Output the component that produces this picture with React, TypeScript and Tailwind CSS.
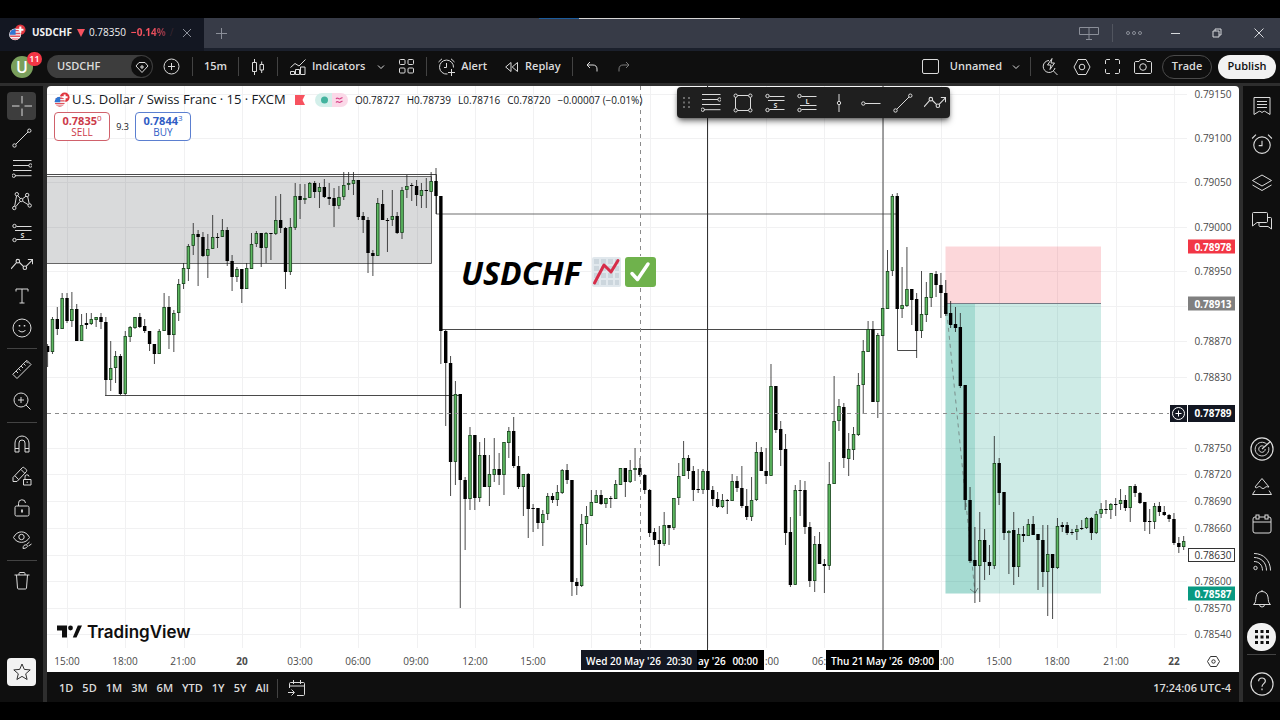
import React from 'react';

type Candle = [high: number, top: number, bottom: number, low: number, up: 0 | 1];

// One entry per 15 minute bar, values are chart y positions
const candles: Candle[] = [
  [344, 346, 352, 367, 0], [317, 319, 352, 354, 1], [307, 319, 329, 335, 0], [293, 298, 329, 329, 1],
  [293, 298, 321, 323, 0], [292, 309, 321, 327, 1], [304, 309, 341, 341, 0], [314, 325, 341, 341, 1],
  [313, 323, 325, 329, 0], [313, 319, 324, 325, 1], [317, 317, 320, 327, 1], [313, 317, 322, 329, 0],
  [317, 322, 380, 395, 0], [341, 368, 380, 391, 1], [351, 356, 368, 383, 1], [354, 356, 394, 395, 0],
  [331, 336, 394, 395, 1], [326, 327, 337, 342, 1], [317, 317, 328, 329, 1], [313, 317, 327, 328, 0],
  [319, 326, 331, 333, 0], [331, 331, 344, 351, 0], [344, 344, 354, 364, 0], [329, 331, 354, 354, 1],
  [293, 307, 331, 331, 1], [296, 307, 335, 349, 0], [310, 313, 335, 352, 1], [279, 284, 313, 321, 1],
  [263, 268, 284, 289, 1], [244, 246, 269, 281, 1], [223, 234, 246, 255, 1], [230, 234, 237, 286, 0],
  [232, 237, 256, 257, 0], [234, 249, 256, 278, 1], [215, 237, 249, 249, 1], [233, 237, 238, 248, 0],
  [219, 230, 237, 237, 1], [227, 230, 261, 266, 0], [255, 261, 277, 291, 0], [267, 269, 277, 282, 1],
  [269, 269, 289, 303, 0], [263, 268, 289, 289, 1], [233, 244, 269, 269, 1], [231, 233, 244, 247, 1],
  [233, 233, 248, 267, 0], [232, 233, 248, 263, 1], [233, 233, 234, 260, 1], [196, 220, 234, 235, 1],
  [194, 220, 228, 233, 0], [227, 228, 272, 289, 0], [218, 227, 272, 275, 1], [183, 196, 228, 230, 1],
  [184, 196, 200, 219, 0], [184, 198, 200, 204, 1], [182, 183, 198, 198, 1], [181, 183, 192, 198, 0],
  [183, 187, 192, 208, 1], [179, 187, 197, 198, 0], [183, 197, 199, 205, 0], [188, 198, 206, 227, 0],
  [186, 197, 206, 209, 1], [172, 185, 197, 200, 1], [172, 183, 185, 190, 1], [172, 180, 184, 195, 1],
  [180, 180, 217, 220, 0], [212, 216, 220, 233, 0], [217, 220, 253, 273, 0], [250, 253, 256, 276, 0],
  [198, 203, 256, 256, 1], [190, 204, 220, 220, 0], [218, 220, 221, 252, 0], [190, 216, 220, 226, 1],
  [212, 216, 233, 234, 0], [187, 190, 233, 239, 1], [175, 186, 190, 198, 1], [183, 185, 186, 201, 0],
  [180, 186, 195, 206, 0], [183, 190, 196, 208, 1], [178, 190, 191, 208, 0], [172, 181, 192, 192, 1],
  [168, 181, 196, 214, 0], [196, 196, 331, 364, 0], [330, 331, 363, 426, 0], [356, 363, 462, 496, 0],
  [381, 394, 462, 485, 1], [394, 394, 480, 608, 0], [477, 480, 499, 550, 0], [427, 435, 499, 510, 1],
  [435, 435, 498, 510, 0], [442, 455, 498, 502, 1], [438, 455, 487, 487, 0], [455, 474, 487, 506, 1],
  [438, 469, 475, 482, 1], [453, 469, 475, 485, 0], [442, 442, 475, 495, 1], [427, 431, 443, 458, 1],
  [417, 431, 466, 468, 0], [456, 466, 487, 489, 0], [474, 474, 487, 516, 1], [473, 474, 509, 538, 0],
  [504, 508, 509, 532, 1], [508, 508, 523, 529, 0], [510, 514, 523, 546, 1], [493, 496, 514, 520, 1],
  [493, 496, 500, 503, 0], [485, 492, 500, 506, 1], [469, 470, 493, 494, 1], [464, 470, 480, 484, 0],
  [480, 480, 582, 596, 0], [578, 582, 586, 595, 0], [514, 524, 586, 587, 1], [506, 516, 524, 545, 1],
  [490, 502, 516, 516, 1], [490, 495, 503, 503, 1], [490, 495, 504, 505, 0], [498, 498, 504, 508, 1],
  [496, 498, 499, 508, 1], [480, 484, 499, 499, 1], [468, 468, 485, 485, 1], [468, 468, 482, 497, 0],
  [460, 470, 482, 483, 1], [448, 468, 470, 481, 1], [458, 468, 475, 477, 0], [474, 475, 490, 494, 0],
  [489, 490, 533, 537, 0], [528, 532, 540, 545, 0], [526, 540, 544, 566, 0], [512, 525, 544, 546, 1],
  [525, 525, 528, 545, 0], [498, 498, 528, 530, 1], [463, 476, 498, 505, 1], [441, 458, 476, 476, 1],
  [455, 458, 471, 479, 0], [466, 471, 490, 501, 0], [469, 489, 490, 493, 0], [469, 471, 490, 494, 1],
  [471, 471, 490, 490, 0], [486, 490, 499, 506, 0], [492, 499, 507, 508, 0], [494, 500, 507, 508, 1],
  [499, 500, 501, 514, 0], [474, 481, 501, 501, 1], [476, 481, 488, 492, 0], [466, 488, 506, 508, 0],
  [489, 506, 517, 520, 0], [477, 500, 517, 521, 1], [442, 452, 500, 501, 1], [447, 452, 471, 471, 0],
  [448, 471, 476, 484, 0], [364, 386, 476, 476, 1], [386, 386, 430, 433, 0], [421, 429, 450, 466, 0],
  [434, 449, 533, 545, 0], [517, 532, 585, 587, 0], [485, 490, 585, 585, 1], [480, 490, 491, 516, 0],
  [481, 490, 527, 534, 0], [522, 527, 581, 587, 0], [536, 544, 581, 592, 1], [532, 544, 564, 564, 0],
  [559, 564, 566, 593, 0], [462, 484, 566, 570, 1], [376, 421, 484, 484, 1], [399, 406, 421, 431, 1],
  [403, 407, 458, 468, 0], [433, 449, 459, 476, 1], [427, 434, 450, 460, 1], [373, 385, 435, 436, 1],
  [340, 351, 385, 414, 1], [321, 329, 352, 352, 1], [321, 329, 402, 402, 0], [333, 335, 402, 418, 1],
  [308, 308, 336, 336, 1], [250, 271, 309, 309, 1], [194, 196, 271, 276, 1], [193, 196, 309, 309, 0],
  [267, 305, 309, 318, 1], [247, 289, 306, 307, 1], [289, 289, 300, 325, 0], [293, 299, 331, 358, 0],
  [271, 314, 331, 338, 1], [282, 297, 315, 322, 1], [273, 273, 298, 307, 1], [271, 274, 285, 297, 0],
  [273, 285, 293, 318, 0], [280, 293, 314, 316, 0], [301, 313, 325, 328, 0], [307, 324, 328, 332, 0],
  [313, 327, 386, 388, 0], [385, 385, 500, 510, 0], [487, 500, 561, 563, 0], [527, 560, 566, 603, 0],
  [512, 540, 566, 602, 1], [529, 540, 562, 580, 0], [545, 562, 566, 575, 0], [436, 463, 566, 569, 1],
  [458, 463, 493, 505, 0], [492, 492, 533, 540, 0], [530, 531, 533, 574, 1], [512, 530, 567, 585, 0],
  [528, 534, 567, 577, 1], [526, 534, 536, 542, 0], [519, 524, 536, 536, 1], [516, 524, 535, 535, 0],
  [534, 534, 540, 590, 0], [525, 540, 572, 587, 0], [525, 554, 572, 616, 1], [554, 554, 568, 619, 0],
  [518, 526, 568, 569, 1], [522, 525, 527, 532, 0], [522, 525, 533, 535, 0], [529, 532, 533, 535, 0],
  [525, 529, 532, 540, 1], [520, 528, 529, 530, 1], [517, 518, 528, 529, 1], [517, 518, 533, 540, 0],
  [511, 514, 533, 534, 1], [503, 509, 514, 518, 1], [500, 509, 510, 514, 0], [503, 504, 510, 519, 1],
  [498, 504, 505, 516, 0], [489, 500, 504, 510, 1], [495, 500, 508, 511, 0], [486, 486, 508, 522, 1],
  [484, 486, 493, 497, 0], [492, 493, 503, 504, 0], [502, 502, 522, 531, 0], [509, 521, 522, 534, 0],
  [503, 506, 522, 529, 1], [502, 506, 512, 516, 0], [506, 512, 515, 516, 0], [514, 515, 519, 522, 0],
  [513, 519, 543, 545, 0], [537, 543, 547, 553, 0], [536, 541, 547, 550, 1],
];

const prices: Array<[string, number]> = [
  ['0.79150', 94], ['0.79100', 138], ['0.79050', 182], ['0.79000', 227], ['0.78950', 271],
  ['', 306], ['0.78870', 341], ['0.78830', 377], ['0.78750', 448], ['0.78720', 474],
  ['0.78690', 501], ['0.78660', 528], ['', 555], ['0.78600', 581], ['0.78570', 608], ['0.78540', 634],
];

const hours = Array.from({ length: 20 }, (_, i) => Math.round(67 + i * 58.26));

// Labels next to a cursor tag only show the part that sticks out
const times: Array<[string, number]> = [
  ['15:00', 67], ['18:00', 125], ['21:00', 183], ['20', 242], ['03:00', 300], ['06:00', 358],
  ['09:00', 416], ['12:00', 475], ['15:00', 533], [':00', 772], ['06:', 819], [':00', 947],
  ['15:00', 999], ['18:00', 1057], ['21:00', 1116], ['22', 1174],
];

const barX = (i: number) => 47.6 + i * 4.855;

/* ---------- icons ---------- */

const Icon = ({ children, className = 'h-5 w-5' }: { children: React.ReactNode; className?: string }) => (
  <svg className={`${className} shrink-0`} viewBox="0 0 20 20" fill="none" stroke="currentColor" strokeWidth="1" aria-hidden="true">
    {children}
  </svg>
);

const CrossIcon = () => <Icon><path d="M10 0v7.500M10 12.500V20M0 10h7.500M12.500 10H20" /></Icon>;
const TrendIcon = () => (
  <Icon><circle cx="2.500" cy="17.500" r="1.700" /><circle cx="17.300" cy="2.700" r="1.700" /><path d="M3.800 16.200 16 4" /></Icon>
);
const FibIcon = () => (
  <Icon><path d="M1 1.500h18.500M1 6.500h16M1 11.500h18.500M3 16.700h16.500" /><circle cx="18.500" cy="6.500" r="1.700" /><circle cx="1.700" cy="16.700" r="1.700" /></Icon>
);
const PatternIcon = () => (
  <Icon>
    <circle cx="4.800" cy="3.200" r="1.700" /><circle cx="15.200" cy="4" r="1.700" /><circle cx="2.300" cy="17" r="1.700" />
    <circle cx="17.700" cy="14.500" r="1.700" /><circle cx="9.200" cy="9" r="1.700" />
    <path d="M4.500 5 2.700 15.200M5.800 4.600l2.500 3M10.500 7.800l3.500-2.600M15.700 5.700l1.500 7.200M10.600 10.200l5.600 3.500M3.700 15.800l4.300-5.300" />
  </Icon>
);
const LevelIcon = ({ letter }: { letter: 'S' | 'L' }) => (
  <Icon>
    <circle cx="2.500" cy="3" r="1.700" /><circle cx="2.500" cy="17" r="1.700" />
    <path d={letter === 'S' ? 'M4.500 3.500H19.500M3 7.500h16.500M4.500 16.500H19.500' : 'M4.500 3.500H19.500M3 12.500h16.500M4.500 16.500H19.500'} />
    <text x="10.500" y={letter === 'S' ? 15 : 10.500} fontSize="7" fontWeight="700" textAnchor="middle" fill="currentColor" stroke="none">{letter}</text>
  </Icon>
);
const PathIcon = () => (
  <Icon className="h-[22px] w-[22px]">
    <path d="M0 13.500 4.800 8M7.500 7.500l4 4M13.700 11.300l5.800-6M15.300 5h4.300v4.300" /><circle cx="6.200" cy="6.500" r="1.600" /><circle cx="12.600" cy="12.500" r="1.600" />
  </Icon>
);
const TextIcon = () => <Icon><path d="M4 5.500V3h12v2.500M10 3v14M7.500 17h5" /></Icon>;
const SmileIcon = () => (
  <Icon><circle cx="10" cy="10" r="9" /><path d="M7.500 7v1.500M12.500 7v1.500" strokeWidth="1.500" /><path d="M6.500 12c1.500 2.500 5.500 2.500 7 0" /></Icon>
);
const RulerIcon = () => (
  <Icon><path d="m.8 15.300 14-14 4.200 4.200-14 14zM4 12l2 2M6.500 9.500l2 2M9 7l2 2M11.500 4.500l2 2M13.800 2.200l2 2" /></Icon>
);
const ZoomIcon = () => <Icon><circle cx="9" cy="9" r="7" /><path d="M14 14l4.500 4.500M9 6v6M6 9h6" /></Icon>;
const MagnetIcon = () => (
  <Icon><path d="M3 18V9a7 7 0 0 1 14 0v9h-4V9a3 3 0 0 0-6 0v9zM3 14.500h4M13 14.500h4" /></Icon>
);
const PencilLockIcon = () => (
  <Icon>
    <path d="m1 11.500 9.300-9.800a1.500 1.500 0 0 1 2 0l2 2a1.500 1.500 0 0 1 0 2L5 15.500H1zM9 3.500l3.800 3.800M3 9.800l3.500 3.700" />
    <path d="M11.500 13.500h7.500v5.500h-7.500zM13 13.500v-2.300a2 2 0 0 1 4-.7M15.200 15.500v1.500" />
  </Icon>
);
const LockIcon = () => (
  <Icon><rect x="3" y="8" width="14" height="10" rx="1.500" /><path d="M6.500 8V5.500a3.500 3.500 0 0 1 7-.5" /><path d="M10 11.500v3" strokeWidth="1.800" /></Icon>
);
const EyeIcon = () => (
  <Icon>
    <path d="M1.500 7.500C5 0 14 0 17.500 7.500 14 14 5 14 1.500 7.500z" /><circle cx="9.500" cy="7" r="2.700" />
    <path d="M11 18.500c0-3 1.500-4 3.500-3.500s1 3.500-3.500 3.500zM14.500 14.500l3-2.500M16.500 16l3-2" />
  </Icon>
);
const TrashIcon = () => (
  <Icon><path d="M2.500 4h15M7 4V2.500c0-.6.400-1 1-1h4c.6 0 1 .4 1 1V4M4.500 4l1 13c0 .6.500 1 1 1h7c.5 0 1-.4 1-1l1-13" /></Icon>
);
const StarIcon = () => (
  <Icon><path d="m10 2 2.300 5.400 5.900.5-4.500 3.900 1.400 5.700L10 14.400l-5.100 3.100 1.400-5.700L1.800 7.900l5.900-.5z" /></Icon>
);
const RectIcon = () => (
  <Icon>
    <path d="M4.500 2.500h11M4.500 17.500h11M2.500 4.500v11M17.500 4.500v11" />
    <circle cx="2.700" cy="2.700" r="1.700" /><circle cx="17.300" cy="2.700" r="1.700" /><circle cx="2.700" cy="17.300" r="1.700" /><circle cx="17.300" cy="17.300" r="1.700" />
  </Icon>
);
const VLineIcon = () => <Icon><path d="M10 1v7.300M10 11.700V19" /><circle cx="10" cy="10" r="1.700" /></Icon>;
const RayIcon = () => <Icon><path d="M4 10.500h15.500" /><circle cx="2.300" cy="10.500" r="1.700" /></Icon>;

const AlarmIcon = () => (
  <Icon className="h-[22px] w-[22px]"><circle cx="10" cy="11" r="7.500" /><path d="M10 7v4.500H7M1 5l3.500-3.500M19 5l-3.500-3.500" /></Icon>
);
const ListIcon = () => (
  <Icon><path d="M2 1.500h16v17l-4-2.500c-1.500-1-1.500-1-3-.2L10 16.500l-1-.7c-1.500-.8-1.500-.8-3 .2l-4 2.500zM5 5.500h10M5 8.500h10M5 11.500h10" /></Icon>
);
const LayersIcon = () => <Icon><path d="M10 2 19.500 7.500 10 13 .5 7.500zM.5 12l9.500 5.500 9.500-5.500" /></Icon>;
const ChatIcon = () => (
  <Icon><path d="M.5 2.500c0-.6.400-1 1-1h13c.6 0 1 .4 1 1v8c0 .6-.4 1-1 1H5L.5 15zM15.500 6.500h3c.6 0 1 .4 1 1V18l-3.500-2.500H8c-.6 0-1-.4-1-1v-3" /></Icon>
);
const TargetIcon = () => (
  <Icon className="h-6 w-6"><circle cx="10" cy="10" r="9.200" /><path d="M14 6A5.700 5.700 0 1 0 15.500 8.500M11.500 7.800a2.700 2.700 0 1 0 1.200 2.200" strokeWidth=".8" /><path d="m10 10 7-6.200" /></Icon>
);
const PyramidIcon = () => (
  <Icon><path d="M10 1.500 17 10M10 1.500 3 10c2 2.500 3.500-2 5.500 0s3 2 4.500.5 2-.5 4-.5M3 13.500.5 17.500h19L17 13.500" /></Icon>
);
const CalendarIcon = () => (
  <Icon><rect x="1" y="3" width="18" height="16" rx="2" /><path d="M1 8h18" /><rect x="4" y="1" width="3" height="4" fill="#0f0f0f" /><rect x="13" y="1" width="3" height="4" fill="#0f0f0f" /></Icon>
);
const FeedIcon = () => (
  <Icon><circle cx="3.500" cy="16" r="1.700" /><path d="M2 9.500c5 0 8.500 3.500 8.500 9M2 5.500c7 0 12.500 5 12.500 13M2 1.500c9.500 0 16.500 7 16.500 17" /></Icon>
);
const BellIcon = () => (
  <Icon><path d="M1.500 15.500c2.500-2 2-4 2.500-7.500.5-3.500 3-5.500 6-5.500s5.500 2 6 5.500c.5 3.500 0 5.500 2.500 7.500zM7.500 15.500a2.500 2.500 0 0 0 5 0M10 2.500V1" /></Icon>
);
const HelpIcon = () => (
  <Icon className="h-6 w-6"><circle cx="10" cy="10" r="9.200" /><path d="M7.200 7.800c0-3.700 5.600-3.700 5.600-.3 0 2.200-2.800 2.200-2.800 4.700M10 13.700v1.600" /></Icon>
);

const PairFlags = ({ className }: { className: string }) => (
  <svg className={`${className} shrink-0`} viewBox="0 0 18 18" aria-hidden="true">
    <circle cx="12" cy="6" r="5.500" fill="#e0363f" />
    <path d="M12 2.700v6.600M8.700 6h6.600" stroke="#fff" strokeWidth="2.200" />
    <circle cx="6.500" cy="11" r="6.300" fill="#fff" />
    <clipPath id="usd"><circle cx="6.500" cy="11" r="5.700" /></clipPath>
    <g clipPath="url(#usd)">
      <path d="M0 5h13v12H0z" fill="#f3f3f5" />
      <path d="M0 7h13M0 10h13M0 13h13M0 16h13" stroke="#e2515b" strokeWidth="1.500" />
      <path d="M0 5h7v6.500H0z" fill="#2f76d2" />
    </g>
  </svg>
);

const Divider = () => <span className="h-[19px] w-px bg-[#434343]" />;
const Chevron = () => (
  <svg className="h-2 w-2" viewBox="0 0 8 8" fill="none" stroke="currentColor" aria-hidden="true"><path d="m1 2.500 3 3 3-3" /></svg>
);

/* ---------- window frame ---------- */

const TabBar = () => (
  <header className="relative flex h-[33px] items-start border-b-[3px] border-[#1b202c] bg-[#373b47] text-[#8b8f99]">
    <div className="absolute left-[539px] top-0 flex h-px w-[201px]">
      <span className="w-10 bg-[#1d5c9c]" />
      <span className="flex-1 bg-[#d5d5d5]" />
    </div>
    <div className="flex h-[33px] w-[204px] shrink-0 items-center bg-[#131722] pb-1 pl-[9px] text-[10px] text-[#f2f2f2]">
      <PairFlags className="mr-1.5 h-[17px] w-[17px]" />
      <span className="w-[45px] font-bold">USDCHF</span>
      <svg className="mr-1 h-2 w-2" viewBox="0 0 8 8" aria-hidden="true"><path d="M0 0h8L4 8z" fill="#f7525f" /></svg>
      <span className="w-[42px] font-medium">0.78350</span>
      <span className="bg-gradient-to-r from-[#f7525f] from-60% to-[#7c3040] bg-clip-text font-bold text-transparent">−0.14%</span>
      <span className="ml-1 text-[#3a2630]">/</span>
      <button aria-label="Close tab" className="ml-auto mr-3 text-[#8b8f99]">
        <svg className="h-2.5 w-2.5" viewBox="0 0 10 10" stroke="currentColor"><path d="m1 1 8 8M9 1 1 9" /></svg>
      </button>
    </div>
    <div className="flex h-[30px] flex-1 items-center">
      <button aria-label="New tab" className="ml-3">
        <svg className="h-[11px] w-[11px]" viewBox="0 0 11 11" stroke="currentColor"><path d="M0 5.500h11M5.500 0v11" /></svg>
      </button>
      <button aria-label="Link windows" className="ml-auto">
        <svg className="h-[13px] w-5" viewBox="0 0 20 13" fill="none" stroke="currentColor"><path d="M.5.500h19v7H.5zM10 .5v11.500M7 12.500h6" /></svg>
      </button>
      <span className="mx-[13px] h-[18px] w-px bg-[#51555f]" />
      <button aria-label="More" className="mr-7">
        <svg className="h-1.5 w-4" viewBox="0 0 16 6" fill="none" stroke="currentColor"><circle cx="2" cy="3" r="1.500" /><circle cx="8" cy="3" r="1.500" /><circle cx="14" cy="3" r="1.500" /></svg>
      </button>
      <div className="mr-4 flex items-center gap-8 text-[#d6d8dc]">
        <button aria-label="Minimize">
          <svg className="h-2.5 w-2.5" viewBox="0 0 10 10" stroke="currentColor"><path d="M1 5.500h9" /></svg>
        </button>
        <button aria-label="Restore">
          <svg className="h-2.5 w-2.5" viewBox="0 0 10 10" fill="none" stroke="currentColor"><path d="M1 3h6v6H1zM3 3V1h6v6H7" /></svg>
        </button>
        <button aria-label="Close">
          <svg className="h-2.5 w-2.5" viewBox="0 0 10 10" stroke="currentColor"><path d="m.5.500 9 9M9.500.500l-9 9" /></svg>
        </button>
      </div>
    </div>
  </header>
);

const Toolbar = () => (
  <nav className="flex h-[35px] items-start border-b-[3px] border-[#2e2e2e] bg-[#0f0f0f] text-[11px] font-semibold text-[#dbdbdb]">
    <div className="flex h-[31px] w-full items-center">
      <button aria-label="Account" className="relative ml-[11px] h-[22px] w-[22px] rounded-full bg-[#7a9f5c] text-[16px] leading-[22px] text-white">
        U
        <span className="absolute -top-1 left-4 h-[14px] w-[15px] rounded-full bg-[#f23645] text-[9px] leading-[14px]">11</span>
      </button>
      <button className="ml-[14px] flex h-[23px] w-[106px] items-center justify-between rounded-full bg-[#3d3d3d] pl-[10px] pr-px">
        USDCHF
        <span className="flex h-[21px] w-[21px] items-center justify-center rounded-full bg-[#0f0f0f]">
          <svg className="h-3.5 w-3.5" viewBox="0 0 14 14" fill="none" stroke="currentColor"><path d="M4 2.500h6L13 6l-6 6.500L1 6zM7 5v4M5 7h4" /></svg>
        </span>
      </button>
      <button aria-label="Compare symbols" className="ml-2.5 mr-3">
        <svg className="h-[17px] w-[17px]" viewBox="0 0 17 17" fill="none" stroke="currentColor"><circle cx="8.500" cy="8.500" r="7.500" /><path d="M8.500 5v7M5 8.500h7" /></svg>
      </button>
      <Divider />
      <button className="w-[45px]">15m</button>
      <Divider />
      <button aria-label="Candles" className="mx-3">
        <svg className="h-4 w-[14px]" viewBox="0 0 14 16" fill="none" stroke="currentColor"><path d="M1.500 3.500h4v9h-4zM3.500 0v3.500M3.500 12.500V16M9 5.500h3.500V11H9zM10.700 2.500v3M10.700 11v3" /></svg>
      </button>
      <Divider />
      <button className="ml-3 flex items-center gap-1.5">
        <svg className="h-4 w-4" viewBox="0 0 16 16" fill="none" stroke="currentColor"><path d="M.5 15.500v-3h4v3zM5.500 15.500v-5h4v5zM10.500 15.500V8h4.500v7.500zM.5 8.500 5 4.500l4 2.500L15.500.500" /></svg>
        Indicators
      </button>
      <button aria-label="Indicator templates" className="ml-3 mr-[14px]"><Chevron /></button>
      <button aria-label="Layouts" className="mr-3">
        <svg className="h-[15px] w-[15px]" viewBox="0 0 15 15" fill="none" stroke="currentColor"><rect x=".5" y=".5" width="5.500" height="5" rx="1" /><rect x="9" y=".5" width="5.500" height="5" rx="1" /><rect x=".5" y="9" width="5.500" height="5" rx="1" /><rect x="9" y="9" width="5.500" height="5" rx="1" /></svg>
      </button>
      <Divider />
      <button className="ml-[11px] flex items-center gap-[5px]">
        <svg className="h-[18px] w-[18px]" viewBox="0 0 18 18" fill="none" stroke="currentColor"><path d="M15.500 9.500a7 7 0 1 0-6 6.500M8.500 5v4.500H6M.5 4 4 .800M16.500 4 13 .800M13.500 11v7M10 14.500h7" /></svg>
        Alert
      </button>
      <button className="ml-[18px] mr-[11px] flex items-center gap-[7px]">
        <svg className="h-3 w-[13px]" viewBox="0 0 13 12" fill="none" stroke="currentColor"><path d="M6 1.500v9L.7 6zM12.500 1.500v9L7.200 6z" strokeLinejoin="round" /></svg>
        Replay
      </button>
      <Divider />
      <button aria-label="Undo" className="ml-[13px] mr-5">
        <svg className="h-3 w-3" viewBox="0 0 12 12" fill="none" stroke="currentColor"><path d="M4 1 1 4l3 3M1 4h6c2.500 0 4 1.500 4 4v2.500" /></svg>
      </button>
      <button aria-label="Redo" className="text-[#7a7a7a]">
        <svg className="h-3 w-3" viewBox="0 0 12 12" fill="none" stroke="currentColor"><path d="m8 1 3 3-3 3M11 4H5C2.500 4 1 5.500 1 8v2.500" /></svg>
      </button>
      <div className="ml-auto flex items-center">
        <button className="flex items-center gap-[11px]">
          <svg className="h-[15px] w-[17px]" viewBox="0 0 17 15" fill="none" stroke="currentColor"><rect x=".5" y=".5" width="16" height="14" rx="1.500" /></svg>
          Unnamed
        </button>
        <button aria-label="Manage layouts" className="ml-2.5 mr-2.5"><Chevron /></button>
        <Divider />
        <div className="ml-2.5 mr-2.5 flex items-center gap-3.5">
          <button aria-label="Quick search">
            <svg className="h-[18px] w-[18px]" viewBox="0 0 18 18" fill="none" stroke="currentColor"><path d="M8 2.500a6 6 0 1 0 6 7.500M12.500 13l4 4M11 .5 6.500 7H10l-1 4.500L13.500 5H10z" /></svg>
          </button>
          <button aria-label="Settings">
            <svg className="h-[18px] w-[18px]" viewBox="0 0 18 18" fill="none" stroke="currentColor"><path d="M5 1.500h8L17 9l-4 7.500H5L1 9z" /><circle cx="9" cy="9" r="2.800" /></svg>
          </button>
          <button aria-label="Fullscreen">
            <svg className="h-[15px] w-[15px]" viewBox="0 0 15 15" fill="none" stroke="currentColor"><path d="M.5 5V2C.5 1 1 .5 2 .5h3M10 .5h3c1 0 1.500.500 1.500 1.500v3M14.500 10v3c0 1-.5 1.500-1.500 1.500h-3M5 14.500H2C1 14.500.5 14 .5 13v-3" /></svg>
          </button>
          <button aria-label="Take a snapshot">
            <svg className="h-[15px] w-[18px]" viewBox="0 0 18 15" fill="none" stroke="currentColor"><path d="M.5 4c0-1 .5-1.500 1.500-1.500h3L6.500.500h5L13 2.500h3c1 0 1.500.500 1.500 1.500v9c0 1-.5 1.500-1.500 1.500H2c-1 0-1.500-.5-1.500-1.500z" /><circle cx="9" cy="8" r="3.300" /></svg>
          </button>
        </div>
        <button className="h-6 w-[50px] rounded-full border border-[#4a4a4a]">Trade</button>
        <button className="ml-1.5 mr-1 h-6 w-[58px] rounded-full bg-[#f2f2f2] text-[#0f0f0f]">Publish</button>
      </div>
    </div>
  </nav>
);

const Tool = ({ label, active, children }: { label: string; active?: boolean; children: React.ReactNode }) => (
  <button aria-label={label} className={active ? 'flex h-7 w-[29px] items-center justify-center rounded bg-[#3d3d3d]' : 'flex h-7 w-[29px] items-center justify-center'}>
    {children}
  </button>
);

const DrawingTools = () => (
  <aside className="flex w-[47px] shrink-0 flex-col items-center border-r-4 border-[#2e2e2e] bg-[#0f0f0f] pb-4 pt-1.5 text-[#dbdbdb]">
    <div className="flex h-[250px] flex-col justify-between">
      <Tool label="Cross" active><CrossIcon /></Tool>
      <Tool label="Trend line"><TrendIcon /></Tool>
      <Tool label="Fib retracement"><FibIcon /></Tool>
      <Tool label="Pattern"><PatternIcon /></Tool>
      <Tool label="Short position"><LevelIcon letter="S" /></Tool>
      <Tool label="Path"><PathIcon /></Tool>
      <Tool label="Text"><TextIcon /></Tool>
      <Tool label="Icons"><SmileIcon /></Tool>
    </div>
    <span className="my-1.5 h-px w-[30px] shrink-0 bg-[#434343]" />
    <div className="flex h-[60px] flex-col justify-between">
      <Tool label="Measure"><RulerIcon /></Tool>
      <Tool label="Zoom in"><ZoomIcon /></Tool>
    </div>
    <span className="my-[7px] h-px w-[30px] shrink-0 bg-[#434343]" />
    <div className="flex h-[124px] flex-col justify-between">
      <Tool label="Magnet"><MagnetIcon /></Tool>
      <Tool label="Keep drawing"><PencilLockIcon /></Tool>
      <Tool label="Lock drawings"><LockIcon /></Tool>
      <Tool label="Hide drawings"><EyeIcon /></Tool>
    </div>
    <span className="my-1.5 h-px w-[30px] shrink-0 bg-[#434343]" />
    <Tool label="Remove"><TrashIcon /></Tool>
    <button aria-label="Favorites" className="mt-auto flex h-7 w-[29px] items-center justify-center rounded bg-[#f2f2f2] text-[#2e2e2e]"><StarIcon /></button>
  </aside>
);

const SideWidgets = () => (
  <aside className="flex w-[41px] shrink-0 flex-col items-center border-l-4 border-[#2e2e2e] bg-[#0f0f0f] pb-1 pt-1.5 text-[#dbdbdb]">
    <div className="flex h-[143px] flex-col justify-between">
      <Tool label="Watchlist"><ListIcon /></Tool>
      <Tool label="Alerts"><AlarmIcon /></Tool>
      <Tool label="Object tree"><LayersIcon /></Tool>
      <Tool label="Chats"><ChatIcon /></Tool>
    </div>
    <div className="mt-auto flex h-[216px] flex-col justify-between">
      <Tool label="Screeners"><TargetIcon /></Tool>
      <Tool label="Pine"><PyramidIcon /></Tool>
      <Tool label="Calendars"><CalendarIcon /></Tool>
      <Tool label="News"><FeedIcon /></Tool>
      <Tool label="Notifications"><BellIcon /></Tool>
      <button aria-label="Products" className="flex h-7 w-[29px] items-center justify-center rounded-full bg-[#f2f2f2] text-[#0f0f0f]">
        <svg className="h-4 w-4" viewBox="0 0 16 16" fill="currentColor"><path d="M1 1h3v3H1zM6.500 1h3v3h-3zM12 1h3v3h-3zM1 6.500h3v3H1zM6.500 6.500h3v3h-3zM12 6.500h3v3h-3zM1 12h3v3H1zM6.500 12h3v3h-3zM12 12h3v3h-3z" /></svg>
      </button>
    </div>
    <span className="mb-[15px] mt-[3px] h-px w-[29px] bg-[#434343]" />
    <Tool label="Help"><HelpIcon /></Tool>
  </aside>
);

/* ---------- chart ---------- */

const PriceTag = ({ y, text, fill }: { y: number; text: string; fill: string }) => (
  <g>
    <rect x="1188" y={y - 7} width="47" height="14" fill={fill} />
    <text x="1213" y={y + 4} textAnchor="middle" fontWeight="700" fill="#fff">{text}</text>
  </g>
);

const Chart = () => (
  <svg className="block w-full" viewBox="47 86 1192 586" fontSize="10" fill="#4a4a4a" role="img" aria-label="USDCHF 15 minute chart">
    <path d="M47 86h1192v586H47z" fill="#fff" />
    <g stroke="#f1f1f2">
      {prices.map(([, y]) => <line key={y} x1="47" x2="1187" y1={y + 0.5} y2={y + 0.5} />)}
      {hours.map(x => <line key={x} x1={x + 0.5} x2={x + 0.5} y1="86" y2="648" />)}
    </g>

    {/* supply zone and levels */}
    <path d="M46 176.500h385.500v87H46z" fill="#131722" fillOpacity=".16" stroke="#666" />
    <g fill="none" stroke="#4a4a4a">
      <path d="M47 174.500h389.500v39.500M105 395.500h356M441 329.500h442M897.500 309v41.500H917" />
      <path d="M436 214h461" strokeOpacity=".8" />
      <path d="M707.500 86v564" stroke="#333" />
      <path d="M883 86v564" stroke="#444" />
    </g>

    {/* short position */}
    <path d="M945.500 246.500H1101V303.500H945.500z" fill="#f23645" fillOpacity=".2" />
    <path d="M945.500 303.500H1101V593.500H945.500z" fill="#089981" fillOpacity=".2" />
    <path d="M945.500 303.500H975V593.500H945.500z" fill="#089981" fillOpacity=".2" />
    <path d="M945.500 303.500H1101" stroke="#787b86" />
    <path d="M946 304 975 593" stroke="#7b8f8c" strokeDasharray="4 4" />
    <path d="m970 589 5 4 3-5" stroke="#6e8682" fill="none" />

    {candles.map(([high, top, bottom, low, up], i) => (
      <g key={i}>
        <line x1={barX(i)} x2={barX(i)} y1={high} y2={low} stroke="#1c1c1c" strokeWidth=".8" />
        {up && bottom - top > 1 ? (
          <rect x={barX(i) - 1.3} y={top + 0.4} width="2.600" height={bottom - top - 0.8} fill="#5cb860" stroke="#16401a" strokeWidth=".8" />
        ) : (
          <rect x={barX(i) - 1.7} y={top} width="3.400" height={bottom - top} fill="#000" />
        )}
      </g>
    ))}

    {/* title note */}
    <text x="461" y="285" fontSize="32" fontWeight="700" fontStyle="italic" fill="#000">USDCHF</text>
    <rect x="592" y="257" width="29" height="30" rx="2" fill="#e1e8ed" />
    <path d="M594 259h5v5h-5zM601 259h5v5h-5zM608 259h5v5h-5zM615 259h4v5h-4zM594 266h5v5h-5zM601 266h5v5h-5zM608 266h5v5h-5zM615 266h4v5h-4zM594 273h5v5h-5zM601 273h5v5h-5zM608 273h5v5h-5zM615 273h4v5h-4zM594 280h5v5h-5zM601 280h5v5h-5zM608 280h5v5h-5zM615 280h4v5h-4z" fill="#ccd6dd" />
    <path d="m594.500 283 9.500-18 7 7 7-11.500" fill="none" stroke="#d62d49" strokeWidth="3" strokeLinecap="round" strokeLinejoin="round" />
    <rect x="625" y="257" width="31" height="30" rx="3" fill="#6fb24c" />
    <path d="m632 273.500 5.500 6L648 264" fill="none" stroke="#fff" strokeWidth="3.500" strokeLinecap="round" strokeLinejoin="round" />

    {/* crosshair */}
    <path d="M640.500 86v170M640.500 288v362M47 413.500h1122" stroke="#8b8b8b" strokeDasharray="4 4" />

    {prices.filter(([text]) => text).map(([text, y]) => <text key={y} x="1213" y={y + 4} textAnchor="middle">{text}</text>)}
    <PriceTag y={246.500} text="0.78978" fill="#f23645" />
    <PriceTag y={303.500} text="0.78913" fill="#808080" />
    <PriceTag y={593.500} text="0.78587" fill="#089981" />
    <rect x="1188" y="405" width="47" height="17" fill="#131722" />
    <text x="1213" y="417" textAnchor="middle" fontWeight="700" fill="#fff">0.78789</text>
    <rect x="1170" y="405" width="17" height="17" fill="#131722" />
    <path d="M1172.500 413.500a6 6 0 1 0 12 0 6 6 0 1 0-12 0M1175.500 413.500h6M1178.500 410.500v6" fill="none" stroke="#fff" />
    <rect x="1188.500" y="548.500" width="46" height="13" fill="#fff" stroke="#333" />
    <text x="1213" y="559" textAnchor="middle" fill="#333">0.78630</text>

    {times.map(([text, x]) => (
      <text key={x} x={x} y="665" textAnchor="middle" fontWeight={text.length === 2 ? 700 : 400}>{text}</text>
    ))}
    <g fontWeight="600" fill="#fff">
      <rect x="697" y="650" width="67" height="20" fill="#000" />
      <text x="698" y="665">ay '26</text>
      <text x="758" y="665" textAnchor="end">00:00</text>
      <rect x="581" y="650" width="116" height="20" fill="#131722" />
      <text x="586" y="665">Wed 20 May '26</text>
      <text x="692" y="665" textAnchor="end">20:30</text>
      <rect x="826" y="650" width="113" height="20" fill="#000" />
      <text x="831" y="665">Thu 21 May '26</text>
      <text x="934" y="665" textAnchor="end">09:00</text>
    </g>
    <path d="M1210.500 656.500h6l3 5-3 5h-6l-3-5z" fill="none" stroke="#333" />
    <circle cx="1213.500" cy="661.500" r="1.700" fill="none" stroke="#333" />

    {/* brand mark */}
    <g fill="#0f0f0f">
      <path d="M57 625.500h10V637.500h-5V630.500h-5zM73 637.500h-.2l5-12H82l-5.500 12z" />
      <circle cx="70.500" cy="628" r="2.400" />
      <text x="87" y="638" fontSize="17" fontWeight="600" fontFamily="Inter, sans-serif">TradingView</text>
    </g>
  </svg>
);

const Legend = () => (
  <div className="absolute left-[7px] top-1.5 text-[#131722]">
    <div className="flex h-4 items-center">
      <PairFlags className="mr-0.5 h-4 w-4" />
      <h1 className="w-[214px] whitespace-nowrap text-[13px]">U.S. Dollar / Swiss Franc · 15 · FXCM</h1>
      <svg className="ml-[9px] h-2.5 w-2.5" viewBox="0 0 10 10" aria-hidden="true"><path d="M0 0h10L7.500 5l2.500 5H0z" fill="#f7525f" /></svg>
      <svg className="ml-2.5 h-[14px] w-[33px]" viewBox="0 0 33 14" aria-hidden="true">
        <path d="M17 0H7a7 7 0 0 0 0 14h10z" fill="#d3efea" />
        <path d="M17 0h9a7 7 0 0 1 0 14h-9z" fill="#fbd9e8" />
        <circle cx="9.500" cy="7" r="3.500" fill="#42b39e" />
        <path d="M21 6c1.500-2 2.500 0 3.500 0s2-1 3-1.500M21 9.500c1.500-2 2.500 0 3.500 0s2-1 3-1.500" fill="none" stroke="#d8478a" strokeWidth="1.200" />
      </svg>
      <div className="ml-[7px] flex gap-[7px] whitespace-nowrap text-[10px]">
        <span>O0.78727</span>
        <span>H0.78739</span>
        <span>L0.78716</span>
        <span>C0.78720</span>
        <span>−0.00007 (−0.01%)</span>
      </div>
    </div>
    <div className="mt-1 flex items-center text-[10px] leading-[11px]">
      <button className="h-[29px] w-14 rounded border border-[#d0616b] bg-white text-[#cc3a4a]">
        <strong className="text-[11px]">0.7835</strong><sup className="text-[8px]">0</sup><br />SELL
      </button>
      <span className="w-[25px] text-center text-[9px]">9.3</span>
      <button className="h-[29px] w-14 rounded border border-[#5b7fd0] bg-white text-[#2f5cc4]">
        <strong className="text-[11px]">0.7844</strong><sup className="text-[8px]">3</sup><br />BUY
      </button>
    </div>
  </div>
);

const FavoriteTools = () => (
  <div className="absolute left-[630px] top-px flex h-[31px] w-[273px] items-center rounded bg-[#1f1f1f] pl-1.5 text-[#dbdbdb] shadow-md shadow-black/50">
    <svg className="mr-1.5 h-[11px] w-[7px]" viewBox="0 0 7 11" fill="#6a6a6a" aria-hidden="true">
      <path d="M0 0h2v2H0zM5 0h2v2H5zM0 4.500h2v2H0zM5 4.500h2v2H5zM0 9h2v2H0zM5 9h2v2H5z" />
    </svg>
    <div className="flex flex-1 justify-between pr-px">
      <Tool label="Fib retracement"><FibIcon /></Tool>
      <Tool label="Rectangle"><RectIcon /></Tool>
      <Tool label="Short position"><LevelIcon letter="S" /></Tool>
      <Tool label="Long position"><LevelIcon letter="L" /></Tool>
      <Tool label="Vertical line"><VLineIcon /></Tool>
      <Tool label="Horizontal ray"><RayIcon /></Tool>
      <Tool label="Trend line"><TrendIcon /></Tool>
      <Tool label="Path"><PathIcon /></Tool>
    </div>
  </div>
);

const ranges = ['1D', '5D', '1M', '3M', '6M', 'YTD', '1Y', '5Y', 'All'];

const RangeBar = () => (
  <footer className="flex h-[30px] items-center bg-[#0f0f0f] pl-3 pr-2 pt-0.5 text-[11px] font-semibold text-[#dbdbdb]">
    <div className="mr-2 flex gap-[9px]">
      {ranges.map(range => <button key={range}>{range}</button>)}
    </div>
    <Divider />
    <button aria-label="Go to date" className="ml-2.5">
      <svg className="h-4 w-[17px]" viewBox="0 0 17 16" fill="none" stroke="currentColor"><path d="M1.500 8V3.500c0-.6.400-1 1-1h13c.6 0 1 .4 1 1v11c0 .6-.4 1-1 1H9M1.500 6h15M5.500 0v4M12.500 0v4M0 12.500h6M3.500 9.500l3 3-3 3" /></svg>
    </button>
    <span className="ml-auto">17:24:06 UTC-4</span>
  </footer>
);

export default function App() {
  return (
    <div className="bg-black py-[18px] font-['Open_Sans','Noto_Sans',sans-serif]">
      <TabBar />
      <Toolbar />
      <main className="flex bg-[#2e2e2e]">
        <DrawingTools />
        <section className="min-w-0 flex-1">
          <div className="relative overflow-hidden rounded-t">
            <Chart />
            <Legend />
            <FavoriteTools />
          </div>
          <RangeBar />
        </section>
        <SideWidgets />
      </main>
    </div>
  );
}
